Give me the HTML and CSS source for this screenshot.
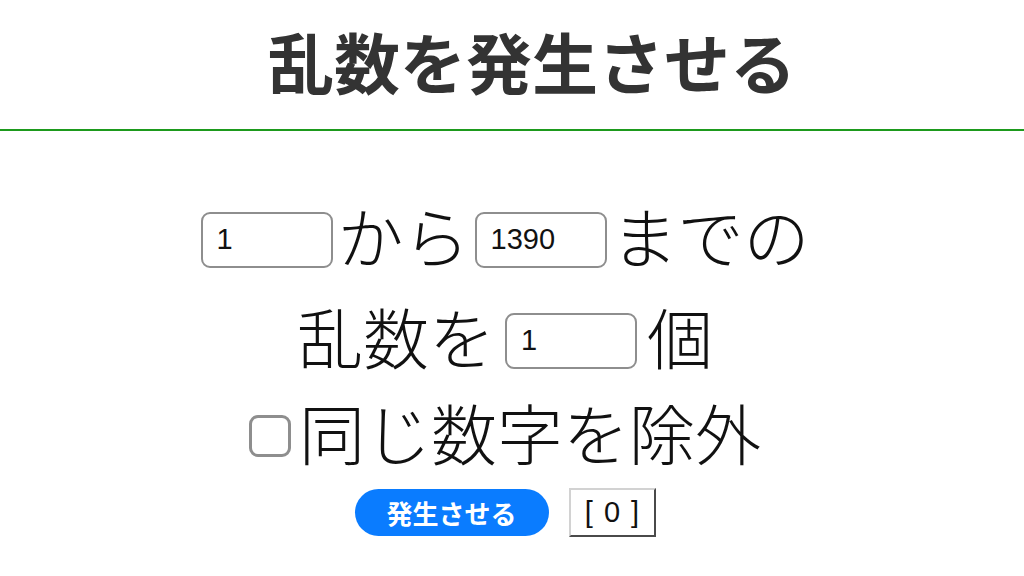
FILE: index.html
```html
<!DOCTYPE html>
<html lang="ja">
<head>
<meta charset="utf-8">
<title>乱数を発生させる</title>
<link rel="stylesheet" href="styles.css">
</head>
<body>
<header class="header">
  <h1 class="title">乱数を発生させる</h1>
</header>
<main class="form">
  <div class="row row-range">
    <input class="num" type="text" value="1">
    <span class="label">から</span>
    <input class="num" type="text" value="1390">
    <span class="label">までの</span>
  </div>
  <div class="row row-count">
    <span class="label">乱数を</span>
    <input class="num" type="text" value="1">
    <span class="label">個</span>
  </div>
  <div class="row row-unique">
    <span class="check"></span>
    <span class="label">同じ数字を除外</span>
  </div>
  <div class="row row-actions">
    <button class="btn" type="button">発生させる</button>
    <span class="result">[ 0 ]</span>
  </div>
</main>
</body>
</html>
```
FILE: styles.css
```css
html, body {
  margin: 0;
  padding: 0;
  background: #ffffff;
}
body {
  font-family: "Noto Sans CJK JP", "Noto Sans", sans-serif;
  color: #111;
}
.header {
  box-sizing: border-box;
  height: 131px;
  padding-bottom: 10px;
  border-bottom: 2px solid #1d9a1d;
  display: flex;
  align-items: center;
  justify-content: center;
}
.title {
  margin: 0;
  font-size: 66px;
  font-weight: 700;
  color: #333;
  line-height: 1;
  padding-left: 40px;
}
.form {
  display: flex;
  flex-direction: column;
  align-items: center;
  padding-top: 52px;
  padding-right: 14px;
}
.row {
  display: flex;
  align-items: center;
  justify-content: center;
}
.row-range { height: 102px; gap: 5px; }
.row-count { height: 100px; gap: 10px; }
.row-unique { height: 92px; gap: 8px; }
.row-actions { height: 60px; gap: 20px; margin-top: 5px; }
.label {
  font-size: 66px;
  font-weight: 300;
  line-height: 1;
  color: #111;
}
.num {
  box-sizing: border-box;
  width: 132px;
  height: 56px;
  border: 2px solid #8e8e8e;
  border-radius: 9px;
  padding: 0 0 0 14px;
  font-family: "Liberation Sans", Arial, sans-serif;
  font-size: 29px;
  color: #111;
  background: #fff;
  margin-top: 11px;
}
.check {
  box-sizing: border-box;
  width: 42px;
  height: 42px;
  border: 3px solid #8e8e8e;
  border-radius: 9px;
  margin-top: 10px;
}
.btn {
  box-sizing: border-box;
  width: 194px;
  height: 47px;
  border: none;
  border-radius: 24px;
  background: #0a7cff;
  color: #fff;
  font-family: "Noto Sans CJK JP", sans-serif;
  font-size: 26px;
  font-weight: 700;
}
.result {
  box-sizing: border-box;
  width: 87px;
  height: 49px;
  border-style: solid;
  border-width: 2px;
  border-color: #d2d2d2 #4a4a4a #4a4a4a #d2d2d2;
  display: flex;
  align-items: center;
  justify-content: center;
  font-family: "Liberation Sans", Arial, sans-serif;
  font-size: 29px;
  word-spacing: 3px;
  color: #111;
  white-space: pre;
}
```
